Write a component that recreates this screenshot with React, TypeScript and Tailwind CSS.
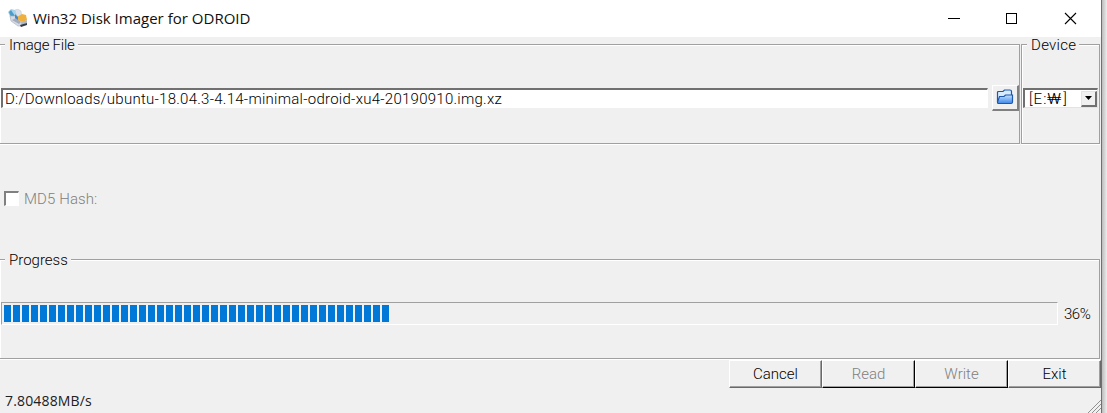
import React from "react";

const uiFont = "font-['Roboto','Noto_Sans_CJK_KR',sans-serif] font-light";
const systemFont = "font-['Open_Sans','Noto_Sans_CJK_KR',sans-serif]";

function AppIcon() {
  return (
    <svg className="ml-[7px] h-[21px] w-[22px] shrink-0" viewBox="0 0 22 21">
      <path d="M1 4 L4 1 L8 2 L12 7 L10 13 L4 11 Z" fill="#a9d3ea" />
      <path d="M2 4 L4 2 L8 8 L7 10 L4 9 Z" fill="#4d9cc8" />
      <path d="M3 8 L8 8 L15 13 L15 18 L11 18 L4 13 Z" fill="#d5dae4" stroke="#9daebd" strokeWidth=".6" />
      <path d="M5 12 L9 10 L14 14 L12 16 Z" fill="#a3acbd" />
      <path d="M8 2 Q11 0 14 3 L15 9 L11 9 L9 6 Z" fill="#dce1e9" stroke="#bac6d4" strokeWidth=".5" />
      <path d="M10 9 L15 6 L19 7 L20 12 L16 14 L11 12 Z" fill="#efb13b" />
      <path d="M8 6 L11 9 L11 12 L8 10 Z" fill="#4789c7" />
      <path d="M14 14 L20 12 L20 15 L15 17 Z" fill="#b5bac2" />
      <path d="M13 17 L20 15 L20 17 L14 19 Z" fill="#333b45" />
    </svg>
  );
}

function FolderIcon() {
  return (
    <svg className="h-[16px] w-[18px]" viewBox="0 0 18 16">
      <defs>
        <linearGradient id="folder" x1="0" y1="0" x2="0" y2="1">
          <stop offset="0" stopColor="#c4e3ff" />
          <stop offset="1" stopColor="#3c86ea" />
        </linearGradient>
      </defs>
      <path d="M1.5 13 V3.5 Q1.5 2.5 2.5 2.5 H7 L8.5 1 H14 Q15.5 1 15.5 2.5 V6" fill="#d8ecff" stroke="#1d57b0" strokeWidth="1.2" />
      <path d="M3.5 7.5 H8 L9.5 6 H16.5 V13 Q16.5 14.5 15 14.5 H2.5 Q1.5 14.5 1.5 13 Z" fill="url(#folder)" stroke="#1d57b0" strokeWidth="1.2" />
    </svg>
  );
}

function Group({ title, tracking, className, children }: { title: string; tracking: string; className: string; children: React.ReactNode }) {
  return (
    <section className={`flex flex-col border border-[#a0a0a0] shadow-[inset_1px_1px_0_#fff,0_1px_0_#fff] ${className}`}>
      <h2 className={`-mt-[7px] mb-[-2px] ml-[5px] h-[18px] self-start bg-[#f0f0f0] pr-[3px] pl-[4px] text-[15px] leading-[14px] whitespace-nowrap ${tracking}`}>{title}</h2>
      {children}
    </section>
  );
}

function PushButton({ label, className }: { label: string; className: string }) {
  return (
    <button className={`h-[28px] border-t border-l border-r border-b border-t-white border-l-white text-center text-[15px] leading-[25px] shadow-[inset_-1px_-1px_0_#a0a0a0] ${className}`}>
      {label}
    </button>
  );
}

export default function App() {
  return (
    <div className={`flex h-[413px] w-[1107px] overflow-hidden bg-[#dcdcdc] text-black ${uiFont}`}>
      <main className="flex w-[1101px] shrink-0 flex-col bg-[#f0f0f0]">
        <header className="flex h-[37px] shrink-0 items-center bg-white">
          <AppIcon />
          <h1 className={`-mt-[2px] ml-[4px] text-[15px] leading-[20px] font-normal tracking-[0.01px] whitespace-nowrap text-[#101010] ${systemFont}`}>Win32 Disk Imager for ODROID</h1>
          <svg className="mt-[-2px] mr-[22px] ml-auto h-[14px] w-[132px]" viewBox="0 0 132 14" fill="none" stroke="#000">
            <path d="M1 7.5H13M59.5 2.5H69.5V12.5H59.5Z" shapeRendering="crispEdges" />
            <path d="M118 2L129 13M129 2L118 13" strokeWidth="1.1" />
          </svg>
        </header>

        <div className="mt-[7px] flex h-[100px] shrink-0 gap-[1px]">
          <Group title="Image File" tracking="tracking-[-0.25px]" className="w-[1020px] border-l-0">
            <div className="mt-[30px] flex h-[27px] items-center">
              <div className="ml-px flex h-[20px] w-[987px] items-center border-t-2 border-l-2 border-r border-b border-t-[#707070] border-l-[#707070] border-r-white border-b-white bg-white pl-[2px]">
                <span className="pt-[2px] text-[15px] leading-[17px] tracking-[0.26px] whitespace-nowrap">D:/Downloads/ubuntu-18.04.3-4.14-minimal-odroid-xu4-20190910.img.xz</span>
              </div>
              <button className="ml-[4px] flex h-[26px] w-[27px] items-center justify-center border-t border-l border-r-2 border-b-2 border-t-white border-l-white border-r-[#808080] border-b-[#808080]">
                <FolderIcon />
              </button>
            </div>
          </Group>
          <Group title="Device" tracking="tracking-[0.3px]" className="w-[79px]">
            <div className="mt-[34px] ml-[1px] flex h-[20px] w-[75px] items-center border-t-2 border-l-2 border-r border-b border-t-[#707070] border-l-[#707070] border-r-[#e3e3e3] border-b-[#e3e3e3] bg-white pl-[4px]">
              <span className="pt-px text-[15px] leading-[17px] tracking-[1px]">[E:<span className="inline-block w-[16px] origin-left scale-x-125">₩</span>]</span>
              <span className="ml-auto flex h-[16px] w-[16px] items-center justify-center border-r-2 border-b-2 border-t border-l border-t-[#e3e3e3] border-l-[#e3e3e3] border-r-[#707070] border-b-[#707070] bg-[#f0f0f0]">
                <svg className="h-[4px] w-[7px]" viewBox="0 0 7 4"><path d="M0 0H7L3.5 4Z" /></svg>
              </span>
            </div>
          </Group>
        </div>

        <div className="mt-[45px] ml-[4px] flex h-[19px] shrink-0 items-center text-[#808080]">
          <span className="h-[15px] w-[15px] border-t-2 border-l-2 border-r border-b border-t-[#808080] border-l-[#808080] border-r-white border-b-white bg-white" />
          <span className="ml-[5px] text-[15px] leading-[18px] tracking-[0.1px]">MD5 Hash:</span>
        </div>

        <Group title="Progress" tracking="tracking-[0px]" className="mt-[51px] h-[100px] w-[1100px] shrink-0 border-l-0">
          <div className="mt-[33px] flex h-[23px] items-center">
            <div className="ml-px flex h-[23px] w-[1057px] items-center gap-[2px] border border-t-[#a0a0a0] border-l-[#a0a0a0] border-r-white border-b-white pl-[2px]">
              {Array.from({ length: 43 }, (_, i) => <i key={i} className="h-[17px] w-[7px] bg-[#0078d7]" />)}
            </div>
            <span className="ml-[6px] pt-px text-[15px] tracking-[-0.5px]">36%</span>
          </div>
        </Group>

        <div className="mt-px flex h-[28px] shrink-0 justify-end">
          <PushButton label="Cancel" className="w-[93px] border-r-[#696969] border-b-[#696969]" />
          <PushButton label="Read" className="w-[93px] border-r-black border-b-black text-[#808080]" />
          <PushButton label="Write" className="w-[93px] border-r-black border-b-black text-[#808080]" />
          <PushButton label="Exit" className="w-[93px] border-r-[#696969] border-b-[#696969]" />
        </div>
        <footer className={`flex h-[25px] items-center pl-[5px] font-normal ${systemFont}`}>
          <span className="text-[14px] leading-[20px] tracking-[0.16px] text-[#202020]">7.80488MB/s</span>
          <svg className="ml-auto h-[13px] w-[13px] self-end" viewBox="0 0 13 13" stroke="#909090"><path d="M0 13L13 0M4 13L13 4M8 13L13 8" /></svg>
        </footer>
      </main>
      <div className="w-[6px] border-l border-[#707070] bg-linear-to-r from-[#bcbcbc] to-[#eeeeee]" />
    </div>
  );
}
